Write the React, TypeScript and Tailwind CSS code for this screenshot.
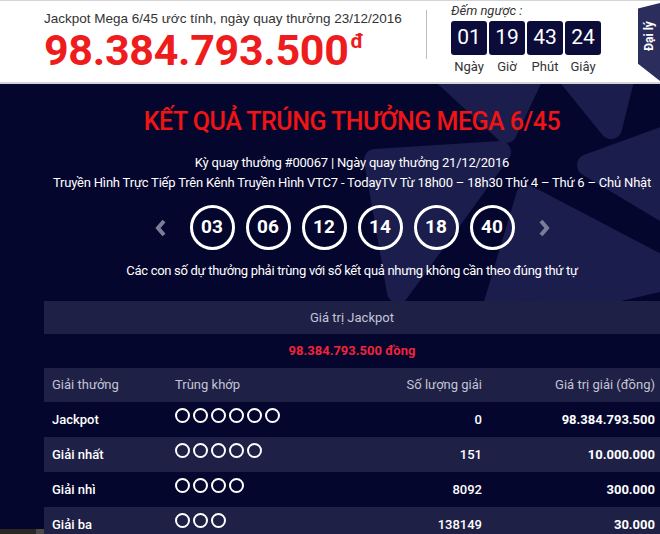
import React from 'react'

const countdown = [
  { value: '01', label: 'Ngày' },
  { value: '19', label: 'Giờ' },
  { value: '43', label: 'Phút' },
  { value: '24', label: 'Giây' },
]

const balls = ['03', '06', '12', '14', '18', '40']

const prizes = [
  { name: 'Jackpot', match: 6, count: '0', value: '98.384.793.500' },
  { name: 'Giải nhất', match: 5, count: '151', value: '10.000.000' },
  { name: 'Giải nhì', match: 4, count: '8092', value: '300.000' },
  { name: 'Giải ba', match: 3, count: '138149', value: '30.000' },
]

// faint pinwheel logo behind the results
const petals = [
  '428,60 540,60 506,132',
  '556,60 628,60 611,128',
  '588,165 690,128 690,226',
  '527,196 680,276 490,320',
  '375,160 500,152 398,292',
]

function Logo() {
  return (
    <svg className="absolute inset-0 h-full w-full" viewBox="0 84 660 445" preserveAspectRatio="none">
      {petals.map((p) => (
        <polygon key={p} points={p} fill="#1b1d4c" stroke="#1b1d4c" strokeWidth="22" strokeLinejoin="round" />
      ))}
    </svg>
  )
}

function Chevron({ dir }: { dir: 'left' | 'right' }) {
  return (
    <svg width="14" height="20" viewBox="0 0 14 20">
      <path
        d={dir === 'left' ? 'M10 3 L4 10 L10 17' : 'M4 3 L10 10 L4 17'}
        fill="none"
        stroke="#7c7e98"
        strokeWidth="4"
      />
    </svg>
  )
}

export default function App() {
  return (
    <div className="h-[534px] w-[660px] overflow-hidden font-['Roboto',sans-serif]">
      {/* Top bar */}
      <div className="relative flex h-[84px] border-t border-b-2 border-[#d4d4d4] bg-white">
        <div className="w-[426px] shrink-0 pl-[44px] pt-[9px]">
          <div className="whitespace-nowrap font-['Liberation_Sans',Arial,sans-serif] text-[13.5px] leading-[18px] text-[#333]">
            Jackpot Mega 6/45 ước tính, ngày quay thưởng 23/12/2016
          </div>
          <div className="flex h-[44px] items-start overflow-visible whitespace-nowrap font-bold text-[#ee1c1c]">
            <span className="mt-[4px] text-[43px] leading-[36px] tracking-[-0.3px]">98.384.793.500</span>
            <span className="ml-[2px] text-[21px] leading-[26px]">đ</span>
          </div>
        </div>
        <div className="mt-[9px] h-[49px] w-px bg-[#bdbdbd]" />
        <div className="ml-[24px] flex flex-col">
          <div className="pt-[2px] text-[13px] italic leading-[16px] text-[#333]">Đếm ngược :</div>
          <div className="mt-[2px] flex gap-[2px]">
            {countdown.map((c) => (
              <div key={c.label} className="flex w-[36px] flex-col items-center">
                <div className="flex h-[34px] w-[36px] items-center justify-center rounded-[3px] bg-[#0b0c3a] text-[21px] text-white">
                  {c.value}
                </div>
                <div className="mt-[5px] text-[13px] leading-[14px] text-[#333]">{c.label}</div>
              </div>
            ))}
          </div>
        </div>
        <div className="absolute right-0 top-[2px] flex h-[78px] w-[22px] justify-center bg-[#2b2d5c] [clip-path:polygon(0_7%,100%_0,100%_100%,0_78%)]">
          <div className="mt-[18px] flex h-[30px] w-[22px] items-center justify-center">
            <span className="-rotate-90 whitespace-nowrap text-[12px] font-bold text-white">Đại lý</span>
          </div>
        </div>
      </div>

      {/* Results */}
      <div className="relative h-[445px] bg-[#05062e]">
        <Logo />
        <div className="relative ml-[44px] flex w-[616px] flex-col items-center">
          <h1 className="mt-[23px] whitespace-nowrap text-[25px] font-medium leading-[30px] tracking-[-0.5px] text-[#f01414]">
            KẾT QUẢ TRÚNG THƯỞNG MEGA 6/45
          </h1>
          <div className="mt-[16px] text-[13px] leading-[20px] tracking-[-0.2px] text-white">
            Kỳ quay thưởng #00067 | Ngày quay thưởng 21/12/2016
          </div>
          <div className="whitespace-nowrap text-[13px] leading-[20px] tracking-[-0.2px] text-white">
            Truyền Hình Trực Tiếp Trên Kênh Truyền Hình VTC7 - TodayTV Từ 18h00 – 18h30 Thứ 4 – Thứ 6 – Chủ Nhật
          </div>
          <div className="mt-[12px] flex items-center">
            <div className="mr-[22px]">
              <Chevron dir="left" />
            </div>
            <div className="flex gap-[11px]">
              {balls.map((b) => (
                <div
                  key={b}
                  className="flex h-[45px] w-[45px] items-center justify-center rounded-full border-[3px] border-white text-[19px] font-bold text-white"
                >
                  {b}
                </div>
              ))}
            </div>
            <div className="ml-[22px]">
              <Chevron dir="right" />
            </div>
          </div>
          <div className="mt-[12px] whitespace-nowrap text-[13px] leading-[18px] tracking-[-0.3px] text-white">
            Các con số dự thưởng phải trùng với số kết quả nhưng không cần theo đúng thứ tự
          </div>

          {/* Table */}
          <div className="mt-[21px] w-full text-[13px]">
            <div className="flex h-[33px] items-center justify-center bg-[#1e2046] text-[#c4c5d4]">Giá trị Jackpot</div>
            <div className="flex h-[34px] items-center justify-center bg-[#05062e] font-bold text-[#f0243a]">
              98.384.793.500 đồng
            </div>
            <div className="grid h-[34px] grid-cols-[123px_150px_173px_170px] items-center bg-[#1e2046] text-[#c4c5d4]">
              <div className="pl-[8px]">Giải thưởng</div>
              <div className="pl-[8px]">Trùng khớp</div>
              <div className="pr-[8px] text-right">Số lượng giải</div>
              <div className="pr-[5px] text-right">Giá trị giải (đồng)</div>
            </div>
            {prizes.map((p, i) => (
              <div
                key={p.name}
                className={`grid h-[35px] grid-cols-[123px_150px_173px_170px] items-center text-white ${
                  i % 2 === 1 ? 'bg-[#1e2046]' : 'bg-[#05062e]'
                }`}
              >
                <div className="pl-[8px] font-medium">{p.name}</div>
                <div className="mb-[8px] flex gap-[3px] pl-[8px]">
                  {Array.from({ length: p.match }).map((_, k) => (
                    <div key={k} className="h-[15px] w-[15px] rounded-full border-2 border-white" />
                  ))}
                </div>
                <div className="pr-[8px] text-right font-medium">{p.count}</div>
                <div className="pr-[5px] text-right font-bold">{p.value}</div>
              </div>
            ))}
          </div>
        </div>
      </div>

      {/* Bottom strip */}
      <div className="flex h-[5px]">
        <div className="w-[36px] bg-[#2a2825]" />
        <div className="w-[37px] bg-[#4b4a48]" />
        <div className="flex-1 bg-[#302d29]" />
      </div>
    </div>
  )
}
